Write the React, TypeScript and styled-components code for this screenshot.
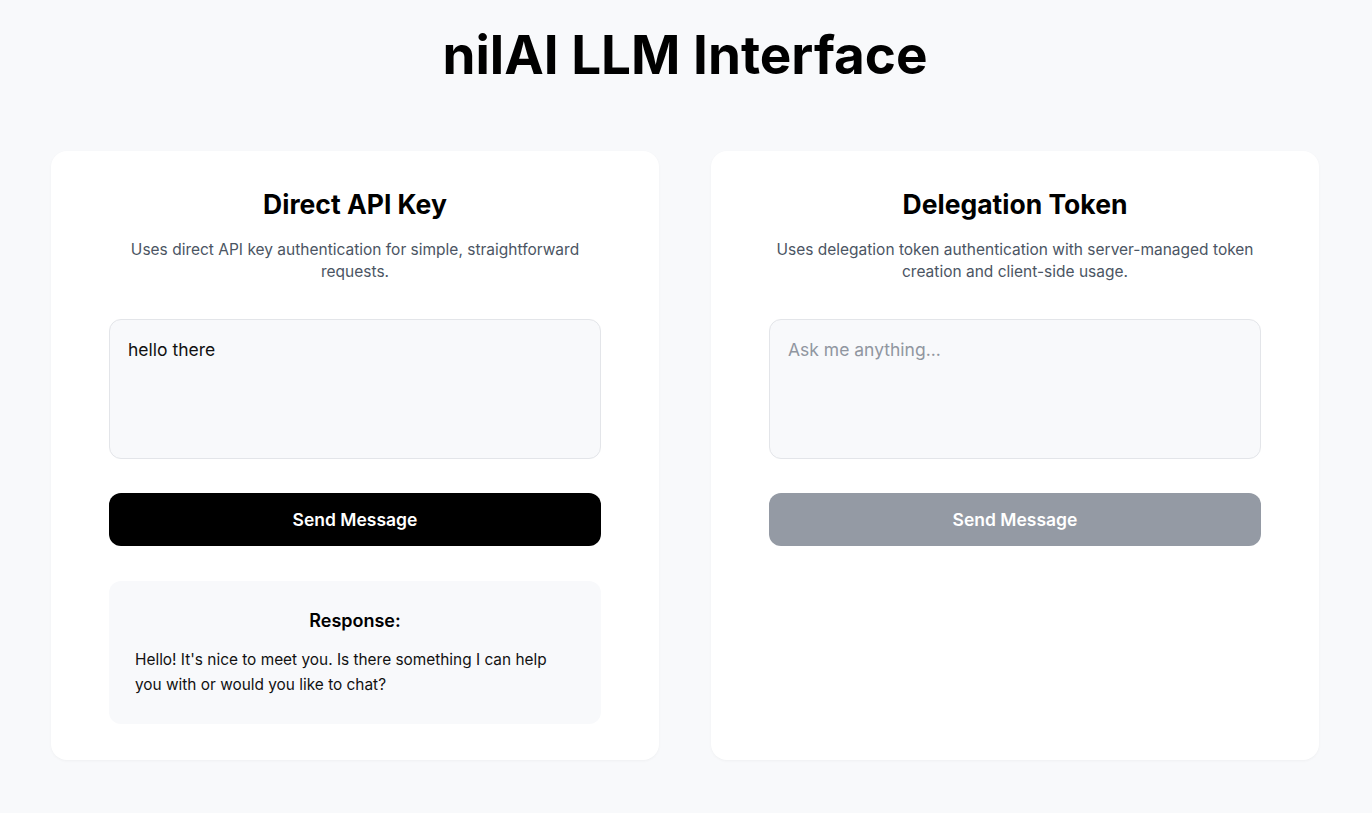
import React, { useState } from "react";
import styled, { createGlobalStyle } from "styled-components";

const GlobalStyle = createGlobalStyle`
	* {
		box-sizing: border-box;
	}
	body {
		margin: 0;
		background: #f8f9fb;
		font-family: Inter, "Noto Sans", sans-serif;
		color: #000;
	}
`;

const Page = styled.main`
	min-height: 100vh;
	padding: 29px 53px 40px 51px;
`;

const Title = styled.h1`
	margin: 0 0 70px;
	text-align: center;
	font-size: 53px;
	line-height: 52px;
	font-weight: 700;
`;

const Grid = styled.div`
	display: grid;
	grid-template-columns: 1fr 1fr;
	gap: 52px;
`;

const Card = styled.section`
	background: #fff;
	border-radius: 16px;
	box-shadow: 0 1px 3px rgba(0, 0, 0, 0.04);
	padding: 36px 58px;
	min-height: 608px;
	display: flex;
	flex-direction: column;
`;

const CardTitle = styled.h2`
	margin: 0 0 18px;
	text-align: center;
	font-size: 26.5px;
	line-height: 34px;
	font-weight: 700;
`;

const Description = styled.p`
	margin: 0 auto 36px;
	max-width: 486px;
	text-align: center;
	font-size: 15.5px;
	line-height: 22px;
	color: #4b5563;
`;

const Prompt = styled.textarea`
	display: block;
	width: 100%;
	height: 140px;
	resize: none;
	padding: 18px 18px;
	border: 1px solid #e3e5e9;
	border-radius: 12px;
	background: #f8f9fb;
	font-family: inherit;
	font-size: 17.5px;
	line-height: 24px;
	color: #111;
	outline: none;

	&::placeholder {
		color: #9096a0;
	}
`;

const SendButton = styled.button<{ $disabled?: boolean }>`
	margin-top: 34px;
	width: 100%;
	height: 53px;
	border: none;
	border-radius: 12px;
	background: ${(p) => (p.$disabled ? "#949aa4" : "#000")};
	color: #fff;
	font-family: inherit;
	font-size: 17.5px;
	font-weight: 600;
	cursor: ${(p) => (p.$disabled ? "not-allowed" : "pointer")};
`;

const ResponseBox = styled.div`
	margin-top: 35px;
	padding: 26px 26px 27px;
	background: #f8f9fb;
	border-radius: 12px;
`;

const ResponseTitle = styled.h3`
	margin: 0 0 12px;
	text-align: center;
	font-size: 18px;
	line-height: 28px;
	font-weight: 600;
`;

const ResponseText = styled.p`
	margin: 0;
	font-size: 15.4px;
	line-height: 25px;
	color: #111;
`;

export default function App() {
	const [directInput, setDirectInput] = useState("hello there");
	const [tokenInput, setTokenInput] = useState("");

	return (
		<>
			<GlobalStyle />
			<Page>
				<Title>nilAI LLM Interface</Title>
				<Grid>
					<Card>
						<CardTitle>Direct API Key</CardTitle>
						<Description>
							Uses direct API key authentication for simple, straightforward requests.
						</Description>
						<Prompt
							value={directInput}
							onChange={(e) => setDirectInput(e.target.value)}
							placeholder="Ask me anything..."
						/>
						<SendButton>Send Message</SendButton>
						<ResponseBox>
							<ResponseTitle>Response:</ResponseTitle>
							<ResponseText>
								Hello! It's nice to meet you. Is there something I can help you with or would you like to chat?
							</ResponseText>
						</ResponseBox>
					</Card>
					<Card>
						<CardTitle>Delegation Token</CardTitle>
						<Description>
							Uses delegation token authentication with server-managed token creation and client-side usage.
						</Description>
						<Prompt
							value={tokenInput}
							onChange={(e) => setTokenInput(e.target.value)}
							placeholder="Ask me anything..."
						/>
						<SendButton $disabled disabled={!tokenInput}>
							Send Message
						</SendButton>
					</Card>
				</Grid>
			</Page>
		</>
	);
}
